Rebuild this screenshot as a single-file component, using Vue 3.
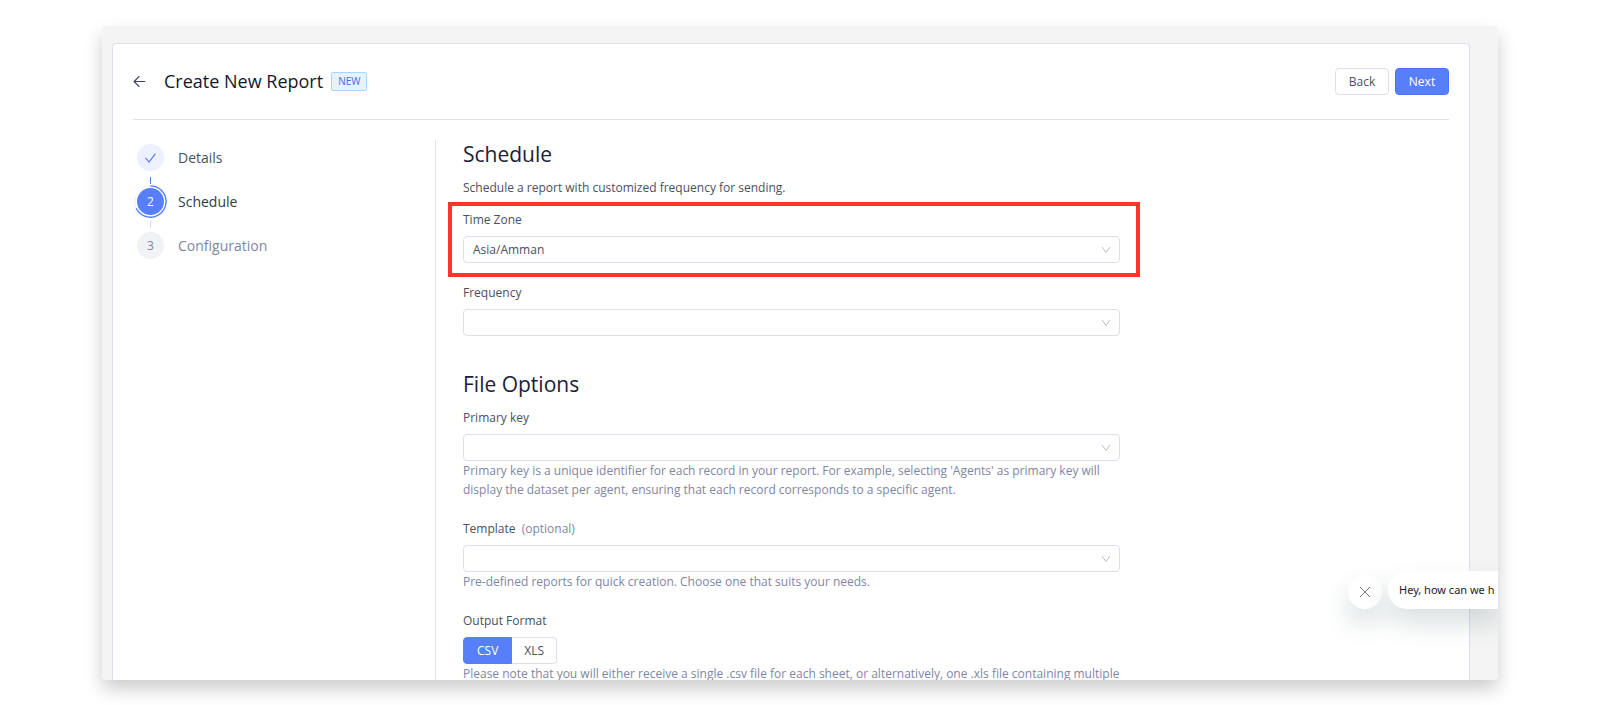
<script setup>
import { ref } from 'vue'

const steps = [
  { label: 'Details', state: 'done' },
  { label: 'Schedule', state: 'active' },
  { label: 'Configuration', state: 'todo' }
]
const timeZone = ref('Asia/Amman')
const frequency = ref('')
const primaryKey = ref('')
const template = ref('')
const format = ref('CSV')
</script>

<template>
  <div class="stage">
    <div class="frame">
      <main class="card">
        <header class="head">
          <button class="arrow" type="button" aria-label="Go back">
            <svg width="13" height="13" viewBox="0 0 13 13" fill="none" stroke="#3c4257" stroke-width="1.2">
              <path d="M12.2 6.5H1.4M6.4 1.2L1.1 6.5l5.3 5.3" />
            </svg>
          </button>
          <h1>Create New Report</h1>
          <span class="tag">NEW</span>
          <div class="actions">
            <button class="btn" type="button">Back</button>
            <button class="btn primary" type="button">Next</button>
          </div>
        </header>

        <div class="body">
          <ol class="steps">
            <li v-for="(s, i) in steps" :key="s.label" class="step" :class="s.state">
              <span class="dot">
                <svg v-if="s.state === 'done'" width="13" height="12" viewBox="0 0 13 12" fill="none" stroke="#5279f6" stroke-width="1.1">
                  <path d="M1.4 5.8l3.6 4.3L11.4 1.6" />
                </svg>
                <template v-else>{{ i + 1 }}</template>
                <svg v-if="s.state === 'active'" class="ring" width="33" height="33" viewBox="0 0 33 33" fill="none">
                  <circle cx="16.5" cy="16.5" r="15.7" stroke="#eeeff3" stroke-width="1" />
                  <path d="M16.5 .8A15.7 15.7 0 1 1 2.2 23.2" stroke="#5279f6" stroke-width="1.3" />
                </svg>
              </span>
              <span>{{ s.label }}</span>
            </li>
          </ol>

          <form class="form" @submit.prevent>
            <h2>Schedule</h2>
            <p class="intro">Schedule a report with customized frequency for sending.</p>

            <div class="field marked">
              <label for="tz">Time Zone</label>
              <div class="pick">
                <select id="tz" v-model="timeZone"><option>Asia/Amman</option></select>
                <svg class="chev" width="10" height="8" viewBox="0 0 10 8"><path d="M1 1l4 5.4L9 1" /></svg>
              </div>
            </div>

            <div class="field">
              <label for="freq">Frequency</label>
              <div class="pick">
                <select id="freq" v-model="frequency"><option value=""></option></select>
                <svg class="chev" width="10" height="8" viewBox="0 0 10 8"><path d="M1 1l4 5.4L9 1" /></svg>
              </div>
            </div>

            <h2 class="second">File Options</h2>
            <div class="field">
              <label for="pk">Primary key</label>
              <div class="pick">
                <select id="pk" v-model="primaryKey"><option value=""></option></select>
                <svg class="chev" width="10" height="8" viewBox="0 0 10 8"><path d="M1 1l4 5.4L9 1" /></svg>
              </div>
              <p class="help">Primary key is a unique identifier for each record in your report. For example, selecting 'Agents' as primary key will display the dataset per agent, ensuring that each record corresponds to a specific agent.</p>
            </div>

            <div class="field">
              <label for="tpl">Template <span class="optional">(optional)</span></label>
              <div class="pick">
                <select id="tpl" v-model="template"><option value=""></option></select>
                <svg class="chev" width="10" height="8" viewBox="0 0 10 8"><path d="M1 1l4 5.4L9 1" /></svg>
              </div>
              <p class="help">Pre-defined reports for quick creation. Choose one that suits your needs.</p>
            </div>

            <fieldset class="field">
              <legend>Output Format</legend>
              <div class="toggle">
                <label v-for="f in ['CSV', 'XLS']" :key="f" :class="{ on: format === f }">
                  <input v-model="format" type="radio" name="format" :value="f" />{{ f }}
                </label>
              </div>
              <p class="help">Please note that you will either receive a single .csv file for each sheet, or alternatively, one .xls file containing multiple</p>
            </fieldset>
          </form>
        </div>
      </main>

      <aside class="chat">
        <button class="close" type="button" aria-label="Close chat">
          <svg width="12" height="12" viewBox="0 0 12 12" stroke="#74777d" stroke-width="1"><path d="M1 1l10 10M11 1L1 11" /></svg>
        </button>
        <div class="bubble">Hey, how can we h</div>
      </aside>
    </div>
  </div>
</template>

<style>
body {
  background: #fff;
}
</style>

<style scoped>
* {
  box-sizing: border-box;
}
.stage {
  height: 100vh;
  padding: 26px 102px 25px;
  font-family: "Open Sans", "Noto Sans", sans-serif;
  font-size: 12px;
  line-height: 19px;
  color: #4b5060;
}
.frame {
  position: relative;
  height: 100%;
  overflow: hidden;
  padding: 17px 28px 0 10px;
  background: #f4f4f4;
  border-radius: 4px;
  box-shadow: 0 9px 18px rgba(0, 0, 0, 0.2);
}
.card {
  min-height: 100%;
  padding: 0 20px;
  background: #fff;
  border: 1px solid #dcdfee;
  border-bottom: 0;
  border-radius: 4px 4px 0 0;
}
button,
select,
input {
  font: inherit;
  color: inherit;
}
.head {
  display: flex;
  align-items: center;
  height: 76px;
  border-bottom: 1px solid #dfe2ee;
}
.arrow {
  display: flex;
  padding: 0;
  border: 0;
  background: none;
}
h1 {
  margin: 0 8px 0 18px;
  padding-bottom: 2px;
  font-size: 18px;
  font-weight: 400;
  line-height: 28px;
  color: #14192a;
}
.tag {
  height: 19px;
  padding: 0 6px;
  font-size: 10px;
  line-height: 17px;
  color: #466bd8;
  background: #e6f3ff;
  border: 1px solid #a6d6fd;
  border-radius: 2px;
}
.actions {
  display: flex;
  gap: 6px;
  margin-left: auto;
}
.btn {
  width: 54px;
  height: 27px;
  padding: 0;
  background: #fff;
  border: 1px solid #dcdfee;
  border-radius: 4px;
}
.primary {
  color: #fff;
  background: #587ffa;
  border-color: #4a73f0;
}
.body {
  display: flex;
  padding-top: 20px;
}
.steps {
  display: flex;
  flex-direction: column;
  gap: 17px;
  width: 302px;
  flex: none;
  margin: 0;
  padding: 4px;
  list-style: none;
  font-size: 14px;
}
.step {
  position: relative;
  display: flex;
  align-items: center;
  gap: 14px;
  height: 27px;
}
.dot {
  position: relative;
  display: flex;
  align-items: center;
  justify-content: center;
  width: 27px;
  height: 27px;
  border-radius: 50%;
  font-size: 12px;
  background: #f1f2f5;
}
.ring {
  position: absolute;
  top: -3px;
  left: -3px;
}
.done .dot {
  background: #edf1ff;
}
.active .dot {
  background: #587ffa;
  color: #fff;
}
.active {
  color: #343a4c;
}
.todo {
  color: #7f86a3;
}
.done::after,
.active::after {
  content: "";
  position: absolute;
  left: 13px;
  top: 33px;
  width: 1px;
  height: 7px;
  background: #587ffa;
}
.active::after {
  background: #d8dbe6;
}
.form {
  flex: 1;
  min-width: 0;
  padding-left: 27px;
  padding-right: 329px;
  border-left: 1px solid #dfe2ee;
}
h2 {
  margin: 0 0 10px;
  font-size: 21px;
  font-weight: 400;
  line-height: 28px;
  color: #1b2136;
}
h2.second {
  margin-top: 34px;
}
.intro {
  margin: 0 0 13px;
}
.field {
  position: relative;
  margin: 0;
  padding: 0;
  border: 0;
}
.field + .field {
  margin-top: 20px;
}
.field > label,
legend {
  display: block;
  margin-bottom: 7px;
  padding: 0;
}
.optional {
  margin-left: 3px;
  color: #7f86a3;
}
.marked::after {
  content: "";
  position: absolute;
  inset: -8px -20px -14px -15px;
  border: 4px solid #ff3526;
  pointer-events: none;
}
.pick {
  position: relative;
}
select {
  display: block;
  width: 100%;
  height: 27px;
  padding: 0 9px;
  appearance: none;
  background: #fff;
  border: 1px solid #dcdfee;
  border-radius: 4px;
}
.chev {
  position: absolute;
  top: 10px;
  right: 9px;
  fill: none;
  stroke: #b9bdcd;
}
.help {
  margin: 0;
  color: #7f86a3;
}
.toggle {
  display: flex;
}
.toggle label {
  position: relative;
  height: 27px;
  padding: 0 12px;
  line-height: 25px;
  border: 1px solid #dcdfee;
  border-radius: 0 4px 4px 0;
}
.toggle label:first-child {
  padding: 0 13px;
  border-radius: 4px 0 0 4px;
}
.toggle label + label {
  border-left: 0;
}
.toggle .on {
  color: #fff;
  background: #587ffa;
  border-color: #587ffa;
}
.toggle input {
  position: absolute;
  inset: 0;
  margin: 0;
  opacity: 0;
}
.chat {
  position: absolute;
  right: 0;
  bottom: 71px;
  display: flex;
  align-items: flex-end;
  gap: 6px;
}
.close {
  display: flex;
  align-items: center;
  justify-content: center;
  width: 34px;
  height: 34px;
  padding: 0;
  border: 0;
  border-radius: 50%;
  background: #fff;
  box-shadow: 0 14px 26px rgba(30, 70, 70, 0.17);
}
.bubble {
  width: 110px;
  height: 38px;
  padding-left: 11px;
  font-family: "Noto Sans", sans-serif;
  font-size: 11px;
  line-height: 38px;
  white-space: nowrap;
  color: #222;
  background: #fff;
  border-radius: 19px 0 0 19px;
  box-shadow: 0 14px 26px rgba(30, 70, 70, 0.17);
}
</style>
